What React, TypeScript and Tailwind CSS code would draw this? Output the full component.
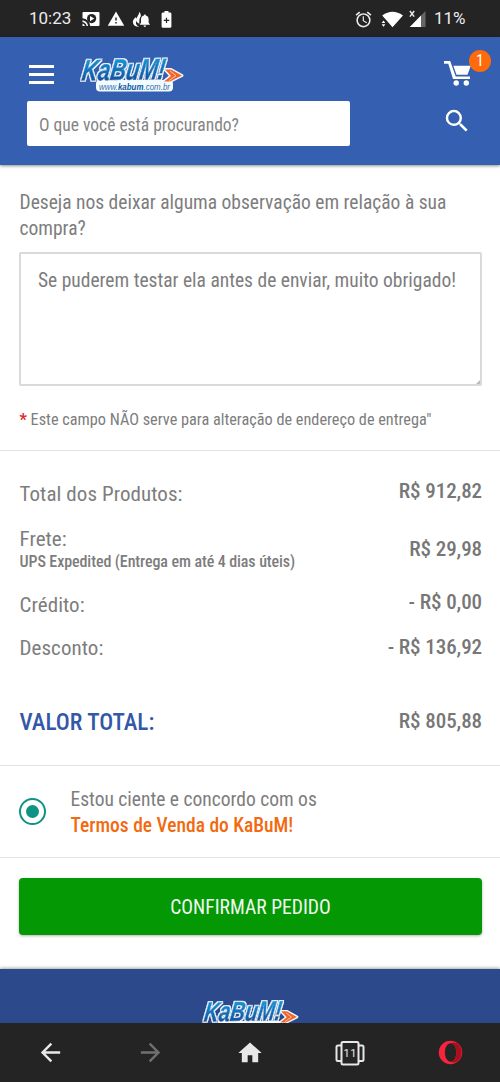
import { MdAlarm, MdArrowBack, MdArrowForward, MdHome, MdSearch, MdWarning } from "react-icons/md";

function Logo({ id, className = "w-[110px] h-[42px]" }: { id: string; className?: string }) {
  return (
    <svg viewBox="0 0 110 42" className={`block shrink-0 overflow-visible ${className}`}>
      <defs>
        <linearGradient id={id} x1="0" y1="0" x2="0" y2="1">
          <stop offset="0.2" stopColor="#1296d6" />
          <stop offset="0.8" stopColor="#0b57a4" />
        </linearGradient>
        <filter id={`${id}-outline`} x="-10%" y="-20%" width="120%" height="140%">
          <feMorphology in="SourceAlpha" operator="dilate" radius="1.3" result="grown" />
          <feFlood floodColor="#eefaff" />
          <feComposite in2="grown" operator="in" result="edge" />
          <feMerge>
            <feMergeNode in="edge" />
            <feMergeNode in="SourceGraphic" />
          </feMerge>
        </filter>
      </defs>
      <rect x="18" y="27" width="77" height="11.5" rx="4" fill="#f4fbff" />
      <path d="M87 16.500h6l11 6-12 6h-6l7-5.500z" fill="#f4642a" stroke="#eefaff" strokeWidth="3" paintOrder="stroke" strokeLinejoin="round" />
      <path d="M92 18l6 4.700-7 5" fill="none" stroke="#fbd0bd" strokeWidth="0.900" />
      <g filter={`url(#${id}-outline)`}>
        <text
          transform="translate(3 27.500) skewX(-9) rotate(-1)"
          x="0"
          y="0"
          fontFamily="'Liberation Sans', sans-serif"
          fontWeight="700"
          fontStyle="italic"
          fontSize="29.500"
          textLength="83"
          lengthAdjust="spacingAndGlyphs"
          fill={`url(#${id})`}
          stroke={`url(#${id})`}
          strokeWidth="0.700"
        >
          KaBuM!
        </text>
      </g>
      <text x="21" y="36.500" fontFamily="'Liberation Sans', sans-serif" fontStyle="italic" fontSize="9" fill="#2f74b0" textLength="71" lengthAdjust="spacingAndGlyphs">
        www.<tspan fontWeight="700" fill="#0d5a9f">kabum</tspan>.com.br
      </text>
    </svg>
  );
}

function StatusBar() {
  return (
    <div className="flex h-[37px] items-center bg-[#242424] pl-[29px] pr-[34px] pt-px font-[Roboto,sans-serif] text-[17px] text-[#ececec]">
      <span className="w-[53px]">10:23</span>
      <svg width="18" height="16" viewBox="0 0 18 16" fill="#fff">
        <path d="M1.500 1h15q1 0 1 1v12q0 1-1 1H8.200Q7.400 8.200.5 7.300V2q0-1 1-1z" />
        <path d="M.5 9.300q4.800.8 5.600 5.700H4.600Q4 11.600.5 10.900zM.5 12.400q2 .5 2.500 2.600H.5z" />
        <circle cx="9.600" cy="7.600" r="4.600" fill="#242424" />
        <path d="M8 4.900v5.400l4.300-2.700z" />
      </svg>
      <MdWarning className="ml-[7px] size-[18px] text-white" />
      <svg className="ml-[7px]" width="19" height="17" viewBox="0 0 20 17" fill="#fff">
        <path d="M7.500.3C8 3 5.500 4.500 5 7.500L3.700 6C1.500 8.300.3 10 1.200 12.600c.8 2.400 3.200 3.500 6.300 3.400-2.300-1-4.200-3.200-3-6 .8 1.700 2 2.400 3.200 2.900V10c0-2.500.9-4 1.700-5.300C9.300 3 8.600 1.200 7.500.3z" />
        <path d="M13.500 3.200c.7 0 1 .5 1 1.100 2 .5 3 2 3 4v3.700l1.300 1.500v.6H8.200v-.6L9.500 12V8.300c0-2 1-3.500 3-4 0-.6.300-1.100 1-1.100zM12.100 14.800h2.800c0 2-2.800 2-2.800 0z" />
      </svg>
      <svg className="ml-[10px]" width="11" height="17" viewBox="0 0 11 17" fill="#fff">
        <path d="M3.500 0h4v1.600H9q1.400 0 1.400 1.300v12.500q0 1.300-1.400 1.300H2q-1.400 0-1.400-1.300V2.900q0-1.300 1.400-1.300h1.500z" />
        <path d="M4.900 6.700h1.200v2.100h2.100V10H6.100v2.100H4.900V10H2.800V8.800h2.100z" fill="#242424" />
      </svg>
      <span className="grow" />
      <MdAlarm className="size-[19px]" />
      <svg className="ml-[8px]" width="23" height="17" viewBox="0 0 23 17" fill="#fff">
        <path d="M1.200 4.500Q11.500-3 22 4.500L11.500 16.200 6.500 10.500z" />
        <path d="M.6 12L2.500 9.600 4.400 12zM.6 13.300h3.800l-1.900 2.400z" />
      </svg>
      <svg className="ml-[5px]" width="18" height="18" viewBox="0 0 18 18">
        <path d="M16.500 1v16H.8z" fill="#666" />
        <path d="M12 5.500V17H.8z" fill="#fff" />
        <path d="M.9 1l4.300 5.700M5.200 1L.9 6.700" stroke="#eee" strokeWidth="1.400" />
      </svg>
      <span className="ml-[7px] w-[32px] whitespace-nowrap">11%</span>
    </div>
  );
}

function Header() {
  return (
    <header className="relative z-10 flex h-[128px] bg-[#355fb0] shadow-[0_1px_3px_rgba(0,0,0,0.45)]">
      <div className="flex w-[350px] flex-col pl-[27px]">
        <div className="flex h-[64px] items-start pt-[16px]">
          <button aria-label="Menu" className="mr-[24px] ml-[2px] mt-[12px] flex w-[25px] shrink-0 flex-col gap-[5px]">
            <i className="h-[3px] bg-white" />
            <i className="h-[3px] bg-white" />
            <i className="h-[3px] bg-white" />
          </button>
          <Logo id="logo-header" />
        </div>
        <div className="flex h-[45px] items-center rounded-[2px] bg-white pl-[12px] pt-[3px] text-[17.500px] text-[#858585]">O que você está procurando?</div>
      </div>
      <div className="relative flex grow flex-col items-start pl-[94px] pt-[24px] text-white">
        <svg width="28" height="26" viewBox="0 0 28 26" fill="#fff">
          <path d="M0 0h6.200l5.500 15.500H26v2.600H9L4.300 2.700H0zM9.300 4.800h17.500l-3.300 8.900H12.500z" />
          <circle cx="12.200" cy="22" r="2.700" />
          <circle cx="22.300" cy="22" r="2.700" />
        </svg>
        <MdSearch className="-ml-[2px] mt-[19px] size-[30px]" />
        <span className="absolute left-[119px] top-[13px] flex size-[22px] items-center justify-center rounded-full bg-[#ff6a0a] text-[16px] leading-none">1</span>
      </div>
    </header>
  );
}

function Row({ label, value, detail, className }: { label: string; value: string; detail?: string; className: string }) {
  return (
    <div className={`flex items-center justify-between ${className}`}>
      <div>
        <div className="text-[21px] leading-[26px] tracking-[0.07px]">{label}</div>
        {detail && <div className="pb-[2px] text-[16px] leading-[19px] font-medium tracking-[-0.09px]">{detail}</div>}
      </div>
      <Price value={value} />
    </div>
  );
}

function Price({ value }: { value: string }) {
  return <span className="pt-px text-[21px] font-medium tracking-[-0.08px] text-[#777]">{value}</span>;
}

export default function App() {
  return (
    <div className="flex h-[1082px] w-[500px] flex-col overflow-hidden bg-white font-['Roboto_Condensed',sans-serif] text-[#7d7d7d]">
      <StatusBar />
      <Header />
      <section className="flex h-[286px] flex-col border-b border-[#e2e2e2] pl-[19px] pr-[18px] pt-[25px]">
        <p className="pl-[0.500px] text-[19.500px] leading-[26px] whitespace-nowrap">
          Deseja nos deixar alguma observação em relação à sua
          <br />
          compra?
        </p>
        <div className="relative mt-[10px] h-[134px] shrink-0 rounded-[2px] border-2 border-[#dadada] pl-[17px] pt-[15px] text-[19.500px] leading-[24px] whitespace-nowrap">
          Se puderem testar ela antes de enviar, muito obrigado!
          <svg className="absolute right-0 bottom-0" width="4" height="4" viewBox="0 0 4 4">
            <path d="M4 0v4H0z" fill="#bbb" />
          </svg>
        </div>
        <p className="pl-[0.500px] pt-[22px] text-[16.250px] leading-[24px] whitespace-nowrap">
          <span className="font-bold text-[#e02a2a]">*</span> Este campo NÃO serve para alteração de endereço de entrega"
        </p>
      </section>
      <section className="flex h-[315px] flex-col border-b border-[#e2e2e2] pl-[19.500px] pr-[18px] pt-[21px]">
        <Row label="Total dos Produtos:" value="R$ 912,82" className="h-[44px] [&>span]:pb-[6px]" />
        <Row label="Frete:" detail="UPS Expedited (Entrega em até 4 dias úteis)" value="R$ 29,98" className="h-[67px]" />
        <Row label="Crédito:" value="- R$ 0,00" className="h-[43px] [&>span]:pb-[5px]" />
        <Row label="Desconto:" value="- R$ 136,92" className="h-[43px]" />
        <div className="mt-[31px] flex h-[43px] items-center justify-between">
          <span className="pt-[2px] text-[23.200px] font-medium text-[#3358a8]">VALOR TOTAL:</span>
          <Price value="R$ 805,88" />
        </div>
      </section>
      <section className="flex h-[92px] items-center border-b border-[#e2e2e2] pl-[19px]">
        <span className="flex size-[27px] items-center justify-center rounded-full border-2 border-[#0e9384]">
          <span className="size-[13px] rounded-full bg-[#0e9384]" />
        </span>
        <p className="ml-[24.500px] pt-[2px] text-[19.500px] leading-[26px]">
          Estou ciente e concordo com os
          <br />
          <span className="font-medium text-[#f26a10]">Termos de Venda do KaBuM!</span>
        </p>
      </section>
      <div className="h-[111px] pl-[19px] pr-[18px] pt-[20px]">
        <button className="flex h-[57px] w-full items-center justify-center rounded-[4px] bg-[#049904] pt-[2px] text-[19.600px] text-[#f0faf0] shadow-[0_1px_3px_rgba(0,0,0,0.3)]">
          CONFIRMAR PEDIDO
        </button>
      </div>
      <footer className="flex h-[54px] justify-center overflow-hidden bg-[#2b498b] pt-[27px] shadow-[0_-1px_3px_rgba(0,0,0,0.35)]">
        <Logo id="logo-footer" className="ml-[2px] h-[39px] w-[103px]" />
      </footer>
      <nav className="z-10 grid h-[59px] grid-cols-5 items-center justify-items-center bg-[#242424] text-[#e8e8e8]">
        <MdArrowBack className="size-[29px]" />
        <MdArrowForward className="size-[29px] text-[#707070]" />
        <MdHome className="size-[28px]" />
        <svg width="30" height="26" viewBox="0 0 30 26" fill="none" stroke="#e8e8e8" strokeWidth="2">
          <rect x="6.500" y="2" width="17" height="22.500" rx="1.500" />
          <path d="M6 5.500H3q-1.500 0-1.500 1.500v12.500q0 1.500 1.500 1.500h3M24 5.500h3q1.500 0 1.500 1.500v12.500q0 1.500-1.500 1.500h-3" />
          <text x="15.200" y="17.200" textAnchor="middle" fontSize="11" fontFamily="Roboto, sans-serif" fill="#e8e8e8" stroke="none" letterSpacing="0.5">11</text>
        </svg>
        <svg width="25" height="25" viewBox="0 0 26 26">
          <path fillRule="evenodd" d="M13 .8a12.200 12.200 0 100 24.400A12.200 12.200 0 0013 .8zM13.200 3.500c3.400 0 5.800 4.200 5.800 9.500s-2.400 9.500-5.800 9.500S7.200 18.300 7.200 13s2.600-9.500 6-9.500z" fill="#f5253c" />
          <path d="M13.200 3.500c3-2 6.300-.7 8 1.100a12.200 12.200 0 010 16.800c-1.700 1.800-5 3.100-8 1.100 3.400 0 5.800-4.200 5.800-9.500s-2.400-9.500-5.800-9.500z" fill="#a80f1f" />
        </svg>
      </nav>
    </div>
  );
}
